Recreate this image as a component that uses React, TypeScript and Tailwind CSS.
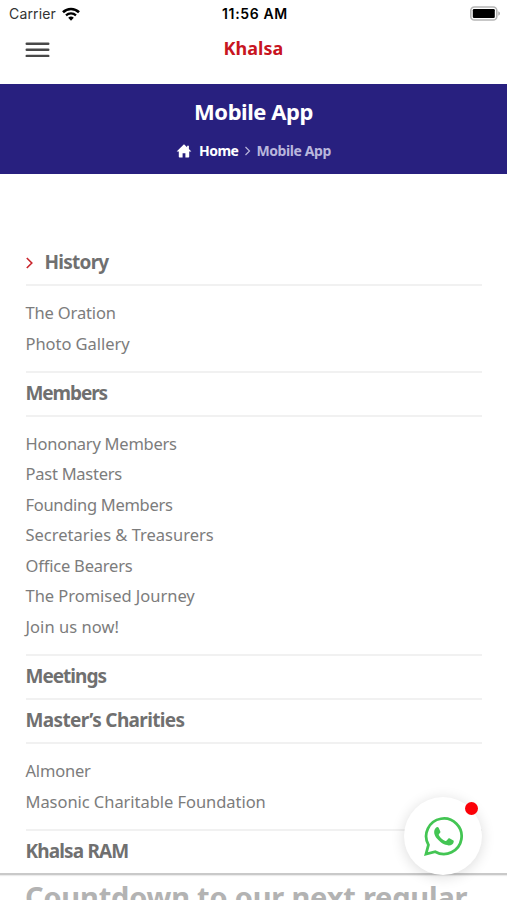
import { ReactElement } from 'react';
import clsx from 'clsx';

interface MenuLink {
  label: string;
  tracking?: string;
}

interface MenuSection {
  title: string;
  tracking?: string;
  active?: boolean;
  links: MenuLink[];
}

const sections: MenuSection[] = [
  {
    title: 'History',
    active: true,
    tracking: 'tracking-[-0.75px]',
    links: [
      { label: 'The Oration', tracking: 'tracking-[-0.15px]' },
      { label: 'Photo Gallery', tracking: 'tracking-[-0.05px]' },
    ],
  },
  {
    title: 'Members',
    tracking: 'tracking-[-1.1px]',
    links: [
      { label: 'Hononary Members', tracking: 'tracking-[-0.25px]' },
      { label: 'Past Masters', tracking: 'tracking-[-0.25px]' },
      { label: 'Founding Members', tracking: 'tracking-[-0.3px]' },
      { label: 'Secretaries & Treasurers', tracking: 'tracking-[0px]' },
      { label: 'Office Bearers', tracking: 'tracking-[-0.2px]' },
      { label: 'The Promised Journey', tracking: 'tracking-[-0.03px]' },
      { label: 'Join us now!', tracking: 'tracking-[0.05px]' },
    ],
  },
  { title: 'Meetings', tracking: 'tracking-[-1px]', links: [] },
  {
    title: 'Master’s Charities',
    tracking: 'tracking-[-0.65px]',
    links: [
      { label: 'Almoner', tracking: 'tracking-[-0.2px]' },
      { label: 'Masonic Charitable Foundation', tracking: 'tracking-[-0.05px]' },
    ],
  },
  { title: 'Khalsa RAM', tracking: 'tracking-[-0.85px]', links: [] },
];

function StatusBar(): ReactElement {
  return (
    <div className="grid h-7 grid-cols-[1fr_100px_1fr] items-center pb-px pl-[9px] pr-[6px] font-['Inter',sans-serif] text-black">
      <div className="flex items-center gap-[6px] text-[14px] tracking-[0.15px] text-[#333]">
        <span>Carrier</span>
        <svg width="18" height="14" viewBox="0 0 18 14" fill="none">
          <path d="M1 5.2a11.5 11.5 0 0 1 16 0" stroke="#000" strokeWidth="2.6" />
          <path d="M4 8.4a7.2 7.2 0 0 1 10 0" stroke="#000" strokeWidth="2.2" />
          <path d="M9 13.8 6.2 10.8a4 4 0 0 1 5.6 0z" fill="#000" />
        </svg>
      </div>
      <span className="text-center text-[14px] font-semibold tracking-[0.65px]">
        11:56 AM
      </span>
      <svg
        className="justify-self-end"
        width="31"
        height="16"
        viewBox="0 0 31 16"
      >
        <rect x=".8" y="1" width="26" height="13" rx="3.6" fill="#fff" stroke="#b5b5b5" strokeWidth="1.6" />
        <rect x="2.8" y="3" width="22" height="9" rx="1.2" fill="#000" />
        <path d="M28.3 5.3c2.2.8 2.2 3.6 0 4.4z" fill="#aaa" />
      </svg>
    </div>
  );
}

function Header(): ReactElement {
  return (
    <header className="grid h-14 grid-cols-3 items-start px-[25px]">
      <svg className="mt-[14px]" width="25" height="16" viewBox="0 0 25 16">
        <path
          d="M1.7 1.7h21.6M1.7 7.8h21.6M1.7 13.9h21.6"
          stroke="#484848"
          strokeWidth="2.4"
          strokeLinecap="round"
        />
      </svg>
      <span className="mt-[6px] text-center text-[18px] font-bold leading-7 tracking-[0.05px] text-[#c8151f]">
        Khalsa
      </span>
    </header>
  );
}

function TitleBar(): ReactElement {
  return (
    <div className="flex h-[90px] flex-col items-center bg-[#28207f] pt-[11px] text-white">
      <h1 className="text-[22px] font-bold leading-8 tracking-[-0.45px]">
        Mobile App
      </h1>
      <div className="mt-[13px] flex items-center text-[14px] font-bold leading-[22px] tracking-[-0.5px]">
        <svg width="16" height="14" viewBox="0 0 16 14" fill="#fff">
          <path d="M8 .3 .6 7.4h2.2v5.4q0 .8.8.8h3V9.2h2.8v4.4h3q.8 0 .8-.8V7.4h2.2L12.9 5V1.8h-1.8v1.5z" />
        </svg>
        <span className="ml-[7px]">Home</span>
        <svg className="ml-[6px] mr-[5px]" width="7" height="10" viewBox="0 0 7 10" fill="none">
          <path d="M1.5 1 5.5 5l-4 4" stroke="#b9b6dc" strokeWidth="1.2" />
        </svg>
        <span className="tracking-[-0.4px] text-[#b9b6dc]">Mobile App</span>
      </div>
    </div>
  );
}

function Section({ title, tracking, active, links }: MenuSection): ReactElement {
  return (
    <li className="border-b-2 border-[#f1f1f1] last:border-b-0">
      <div
        className={clsx(
          'flex h-[42px] items-center pb-px text-[19px] font-bold text-[#707070]',
          tracking
        )}
      >
        {active && (
          <svg className="mr-[11px]" width="8" height="12" viewBox="0 0 8 12" fill="none">
            <path d="M.8 1l5 5-5 5" stroke="#c9252c" strokeWidth="1.6" />
          </svg>
        )}
        <span>{title}</span>
      </div>
      {links.length > 0 && (
        <ul className="border-t-2 border-[#f1f1f1] pb-[11.4px] pt-[12px]">
          {links.map((link) => (
            <li
              key={link.label}
              className="flex h-[30.6px] items-center text-[16.5px] text-[#7c7c7c]"
            >
              <span className={link.tracking}>{link.label}</span>
            </li>
          ))}
        </ul>
      )}
    </li>
  );
}

function ChatButton(): ReactElement {
  return (
    <div className="absolute left-[404px] top-[797px] flex h-[78px] w-[78px] items-center justify-center rounded-full bg-white shadow-[0_2px_14px_rgba(0,0,0,0.14)]">
      <svg width="41" height="41" viewBox="0 0 40 40" fill="none">
        <path
          d="M2.9 37.1l2.4-8.9A17.3 17.3 0 1 1 11.9 34.8z"
          stroke="#43c553"
          strokeWidth="2.7"
        />
        <path
          d="M12.6 11.4c.9-.9 2.300-.9 2.800.2l1.500 3.500c.3.8-.2 1.400-1.300 2.500-.4.5-.3.9 0 1.400 1.500 2.600 3.500 4.200 6.200 5.300.5.2.9.2 1.300-.3l1.500-1.700c.5-.6 1-.6 1.600-.3l3 1.600c.7.4.9.7.8 1.400-.4 2.500-2.500 3.800-5 3.700-3.900-.2-8.200-2.700-11.200-6.400-3-3.600-4.100-7.800-1.200-10.900z"
          fill="#43c553"
        />
      </svg>
      <span className="absolute left-[61px] top-[5px] h-[13px] w-[13px] rounded-full bg-[#fb0007]" />
    </div>
  );
}

export default function App(): ReactElement {
  return (
    <div className="relative h-[900px] w-[507px] overflow-hidden bg-white font-['Noto_Sans',sans-serif]">
      <StatusBar />
      <Header />
      <TitleBar />
      <nav className="h-[701px] border-b-2 border-[#c9c9c9] px-[25.5px] pt-[68px] shadow-[0_1px_1px_rgba(0,0,0,0.08)]">
        <ul>
          {sections.map((section) => (
            <Section key={section.title} {...section} />
          ))}
        </ul>
      </nav>
      <h2 className="whitespace-nowrap px-[25px] pt-[2px] text-[29px] font-bold leading-10 tracking-[-0.2px] text-[#b3b3b3]">
        Countdown to our next regular
      </h2>
      <ChatButton />
    </div>
  );
}
